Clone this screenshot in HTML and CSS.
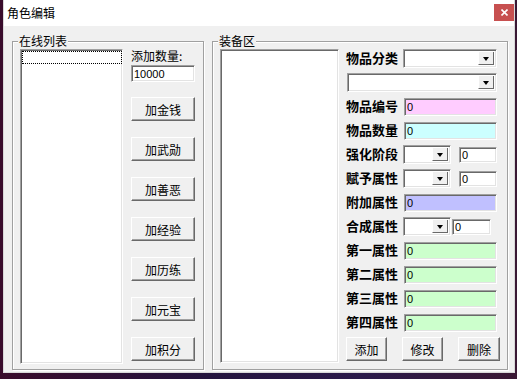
FILE: index.html
```html
<!DOCTYPE html>
<html lang="zh-CN">
  <head>
    <meta charset="UTF-8" />
    <title>角色编辑</title>
    <link rel="stylesheet" href="styles.css">
  </head>
  <body>
    <div class="window">
      <div class="titlebar">
        <span class="title">角色编辑</span>
        <span class="close">
          <svg width="7" height="7" viewBox="0 0 7 7"><path d="M0.5 0.5 L6.5 6.5 M6.5 0.5 L0.5 6.5" stroke="#fff" stroke-width="1.6"/></svg>
        </span>
      </div>
      <div class="client">
        <fieldset class="group group-online">
          <legend>在线列表</legend>
          <div class="listbox online-list"><div class="focus-row"></div></div>
          <div class="side">
            <div class="qty-label">添加数量:</div>
            <input class="edit qty" value="10000">
            <button class="btn add-btn">加金钱</button>
            <button class="btn add-btn">加武勋</button>
            <button class="btn add-btn">加善恶</button>
            <button class="btn add-btn">加经验</button>
            <button class="btn add-btn">加历练</button>
            <button class="btn add-btn">加元宝</button>
            <button class="btn add-btn">加积分</button>
          </div>
        </fieldset>
        <fieldset class="group group-equip">
          <legend>装备区</legend>
          <div class="listbox equip-list"></div>
          <div class="props">
            <div class="row">
              <span class="prop-label">物品分类</span>
              <div class="combo combo-type"><span class="drop"></span></div>
            </div>
            <div class="row">
              <div class="combo combo-item"><span class="drop"></span></div>
            </div>
            <div class="row">
              <span class="prop-label">物品编号</span>
              <input class="edit wide pink" value="0">
            </div>
            <div class="row">
              <span class="prop-label">物品数量</span>
              <input class="edit wide cyan" value="0">
            </div>
            <div class="row">
              <span class="prop-label">强化阶段</span>
              <div class="combo combo-small"><span class="drop"></span></div>
              <input class="edit small" value="0">
            </div>
            <div class="row">
              <span class="prop-label">赋予属性</span>
              <div class="combo combo-small"><span class="drop"></span></div>
              <input class="edit small" value="0">
            </div>
            <div class="row">
              <span class="prop-label">附加属性</span>
              <input class="edit wide lavender" value="0">
            </div>
            <div class="row">
              <span class="prop-label">合成属性</span>
              <div class="combo combo-small"><span class="drop"></span></div>
              <input class="edit small tight" value="0">
            </div>
            <div class="row">
              <span class="prop-label">第一属性</span>
              <input class="edit wide green" value="0">
            </div>
            <div class="row">
              <span class="prop-label">第二属性</span>
              <input class="edit wide green" value="0">
            </div>
            <div class="row">
              <span class="prop-label">第三属性</span>
              <input class="edit wide green" value="0">
            </div>
            <div class="row">
              <span class="prop-label">第四属性</span>
              <input class="edit wide green" value="0">
            </div>
            <div class="row actions">
              <button class="btn act-btn">添加</button>
              <button class="btn act-btn">修改</button>
              <button class="btn act-btn">删除</button>
            </div>
          </div>
        </fieldset>
      </div>
    </div>
  </body>
</html>
```

FILE: styles.css
```css
body, html {
    margin: 0;
    padding: 0;
    height: 100%;
    overflow: hidden;
    background: linear-gradient(90deg, #3a0c2c 0%, #24143e 40%, #2b1a4a 70%, #3a1834 100%);
    font-family: "Noto Sans CJK SC", "Liberation Sans", sans-serif;
    font-size: 12px;
    color: #000;
}

.window {
    margin-left: 3px;
    width: 512px;
    height: 373px;
    box-sizing: border-box;
    border-left: 1px solid #d8d8d8;
    border-right: 1px solid #d8d8d8;
    border-bottom: 1px solid #d8d8d8;
    background-color: #f0f0f0;
}

.titlebar {
    height: 26px;
    background-color: #ffffff;
    display: flex;
    align-items: flex-start;
    justify-content: space-between;
}

.title {
    padding: 5px 0 0 3px;
    line-height: 16px;
}

.close {
    width: 20px;
    height: 17px;
    margin-top: 4px;
    background-color: #c75050;
    display: flex;
    align-items: center;
    justify-content: center;
}

.client {
    display: flex;
    gap: 8px;
    padding: 8px 0 0 8px;
}

.group {
    margin: 0;
    padding: 1px 7px 0 7px;
    border: 1px solid #a0a0a0;
    box-shadow: inset 1px 1px #fff, 1px 1px #fff;
    box-sizing: border-box;
    height: 336px;
    min-width: 0;
    display: flex;
    align-items: flex-start;
}

.group legend {
    margin-left: -2px;
    padding: 0 1px;
    line-height: 14px;
    background-color: #f0f0f0;
}

.group-online {
    width: 192px;
}

.group-equip {
    width: 296px;
}

/* sunken controls */
.listbox, .edit, .combo {
    box-sizing: border-box;
    border: 1px solid;
    border-color: #a0a0a0 #fff #fff #a0a0a0;
    box-shadow: inset 1px 1px #696969, inset -1px -1px #e3e3e3;
    background-color: #fff;
}

.online-list {
    width: 103px;
    height: 315px;
    padding: 1px 0 0 1px;
}

.focus-row {
    width: 100px;
    height: 13px;
    box-sizing: border-box;
    border: 1px dotted #000;
}

.equip-list {
    width: 119px;
    height: 314px;
}

.side {
    margin-left: 8px;
    display: flex;
    flex-direction: column;
    width: 64px;
}

.qty-label {
    line-height: 14px;
}

.edit {
    margin: 0;
    padding: 0 0 0 2px;
    font-family: "Liberation Sans", Arial, sans-serif;
    font-size: 11px;
    color: #000;
    outline: none;
}

.qty {
    margin-top: 2px;
    width: 64px;
    height: 17px;
}

.btn {
    box-sizing: border-box;
    margin: 0;
    padding: 0;
    font-family: "Noto Sans CJK SC", sans-serif;
    font-size: 12px;
    color: #000;
    background-color: #f0f0f0;
    border: 1px solid;
    border-color: #fff #696969 #696969 #fff;
    box-shadow: inset -1px -1px #a0a0a0;
}

.add-btn {
    width: 64px;
    height: 24px;
    margin-top: 16px;
}

.qty + .add-btn {
    margin-top: 15px;
}

.props {
    margin-left: 7px;
    width: 154px;
    display: flex;
    flex-direction: column;
    gap: 5px;
}

.row {
    height: 19px;
    display: flex;
    align-items: center;
}

.prop-label {
    width: 57px;
    font-size: 13px;
    font-weight: bold;
    line-height: 16px;
    margin-top: -2px;
}

.combo {
    height: 19px;
    display: flex;
    justify-content: flex-end;
    padding: 2px;
}

.combo-type {
    width: 94px;
}

.combo-item {
    width: 150px;
    margin-left: 1px;
}

.combo-small {
    width: 48px;
}

.drop {
    width: 16px;
    box-sizing: border-box;
    border-left: 1px solid #fff;
    border-right: 1px solid #696969;
    border-bottom: 1px solid #696969;
    background-color: #f0f0f0;
    display: flex;
    align-items: flex-end;
    justify-content: center;
    padding-bottom: 3px;
}

.drop::after {
    content: "";
    border-left: 3.5px solid transparent;
    border-right: 3.5px solid transparent;
    border-top: 4px solid #000;
}

.wide {
    margin-left: 1px;
    width: 93px;
    height: 18px;
}

.small {
    margin-left: 8px;
    width: 38px;
    height: 16px;
}

.small.tight {
    margin-left: 1px;
    width: 39px;
}

.pink { background-color: #ffccff; }
.cyan { background-color: #ccffff; }
.lavender { background-color: #c0c0ff; }
.green { background-color: #ccffcc; }

.actions {
    height: 24px;
    gap: 15px;
}

.act-btn {
    width: 41px;
    height: 24px;
}

.act-btn:last-child {
    width: 42px;
}
```
